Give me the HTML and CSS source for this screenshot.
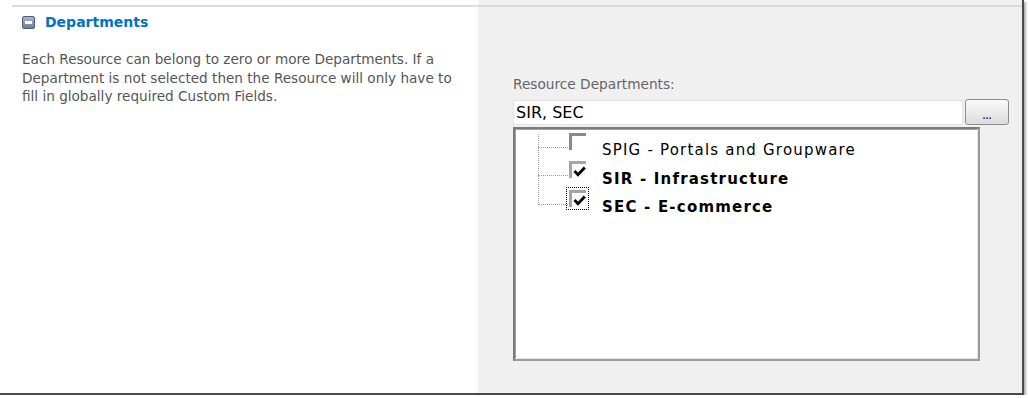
FILE: index.html
```html
<!DOCTYPE html>
<html lang="en">
<head>
    <meta charset="UTF-8">
    <title>Departments</title>
    <link rel="stylesheet" href="styles.css">
</head>
<body>
    <div class="shot">
        <div class="left">
            <div class="rule">
                <h2 class="section-title">
                    <span class="toggle"><span class="minus"></span></span>
                    Departments
                </h2>
                <p class="desc">Each Resource can belong to zero or more Departments. If a Department is not selected then the Resource will only have to fill in globally required Custom Fields.</p>
            </div>
        </div>
        <div class="right">
            <div class="rule">
                <label class="field-label" for="depts">Resource Departments:</label>
                <div class="input-row">
                    <input type="text" id="depts" value="SIR, SEC">
                    <button class="browse">...</button>
                </div>
                <div class="tree">
                    <div class="tree-line"></div>
                    <div class="node">
                        <span class="branch"></span>
                        <span class="check"></span>
                        <span class="node-text">SPIG - Portals and Groupware</span>
                    </div>
                    <div class="node">
                        <span class="branch"></span>
                        <span class="check checked">
                            <svg width="13" height="11" viewBox="0 0 13 11"><path d="M1.5 5 L5 8.8 L11.8 1.5" fill="none" stroke="#000" stroke-width="2.8"/></svg>
                        </span>
                        <span class="node-text bold">SIR - Infrastructure</span>
                    </div>
                    <div class="node">
                        <span class="branch"></span>
                        <span class="check checked focus">
                            <svg width="13" height="11" viewBox="0 0 13 11"><path d="M1.5 5 L5 8.8 L11.8 1.5" fill="none" stroke="#000" stroke-width="2.8"/></svg>
                        </span>
                        <span class="node-text bold">SEC - E-commerce</span>
                    </div>
                </div>
            </div>
        </div>
    </div>
</body>
</html>
```

FILE: styles.css
```css
body {
    margin: 0;
    background: #ffffff;
    font-family: "DejaVu Sans", Verdana, sans-serif;
}
.shot {
    width: 1022px;
    height: 393px;
    display: grid;
    grid-template-columns: 478px 1fr;
    border-right: 2px solid #4a4a4a;
    border-bottom: 2px solid #4a4a4a;
    box-shadow: 2px 2px 2px #b0b0b0;
}
.left {
    background: #ffffff;
    padding-top: 5px;
    padding-left: 12px;
}
.right {
    background: #f0f0f0;
    padding-top: 5px;
}
.rule {
    border-top: 2px solid #dcdcdc;
    height: 100%;
    box-sizing: border-box;
}
.left .rule {
    padding-left: 10px;
}
.section-title {
    margin: 7px 0 0 0;
    display: flex;
    align-items: center;
    font-size: 14px;
    font-weight: bold;
    color: #0072c6;
    height: 16px;
}
.toggle {
    width: 11px;
    height: 11px;
    border: 1px solid #4d5d78;
    border-radius: 2px;
    background: linear-gradient(#a9b6cc, #6c7d9c);
    margin-right: 10px;
    display: flex;
    align-items: center;
    justify-content: center;
}
.minus {
    width: 7px;
    height: 3px;
    background: #ffffff;
}
.desc {
    margin: 20px 0 0 0;
    width: 440px;
    font-size: 13.6px;
    line-height: 18.5px;
    color: #555555;
}
.right .rule {
    padding-left: 35px;
}
.field-label {
    display: block;
    margin-top: 69px;
    font-size: 13.7px;
    line-height: 16px;
    color: #666666;
}
.input-row {
    display: flex;
    align-items: center;
    height: 26px;
    margin-top: 7px;
}
.input-row input {
    width: 450px;
    height: 25px;
    box-sizing: border-box;
    border: 1px solid #e2e2e2;
    padding: 0 2px;
    font-family: "DejaVu Sans", Verdana, sans-serif;
    font-size: 16px;
    color: #000000;
    background: #ffffff;
    outline: none;
}
.browse {
    margin-left: 2px;
    width: 44px;
    height: 26px;
    border: 1px solid #8d8d8d;
    border-radius: 3px;
    background: linear-gradient(#fafafa, #dcdcdc);
    font-size: 11px;
    font-weight: bold;
    color: #333377;
    padding: 6px 0 0 0;
    line-height: 10px;
}
.tree {
    position: relative;
    width: 467px;
    height: 234px;
    box-sizing: border-box;
    margin-top: 2px;
    background: #ffffff;
    border: 2px solid #9a9a9a;
    border-top-color: #7a7a7a;
    border-left-color: #7a7a7a;
    box-shadow: inset -1px -1px 0 #e4e4e4, inset 1px 1px 0 #a0a0a0;
    padding-top: 7px;
    padding-left: 23px;
}
.tree-line {
    position: absolute;
    left: 23px;
    top: 5px;
    height: 71px;
    border-left: 1px dotted #a0a0a0;
}
.node {
    display: flex;
    align-items: center;
    height: 28.5px;
}
.branch {
    width: 30px;
    border-top: 1px dotted #a0a0a0;
    margin-bottom: 6px;
}
.check {
    width: 17px;
    height: 17px;
    box-sizing: border-box;
    border-top: 3px solid #8a8a8a;
    border-left: 3px solid #8a8a8a;
    margin-left: 1px;
    margin-bottom: 18px;
    display: flex;
    align-items: flex-end;
    justify-content: flex-end;
}
.check.checked {
    border-top-color: #a5a5a5;
    border-left-color: #a5a5a5;
}
.check svg {
    margin: 0 0 1px 0;
}
.check.focus {
    outline: 1px dotted #000000;
    outline-offset: 2px;
}
.node-text {
    margin-left: 16px;
    font-size: 15px;
    color: #000000;
    letter-spacing: 1.2px;
}
.node-text.bold {
    font-weight: bold;
}
```
